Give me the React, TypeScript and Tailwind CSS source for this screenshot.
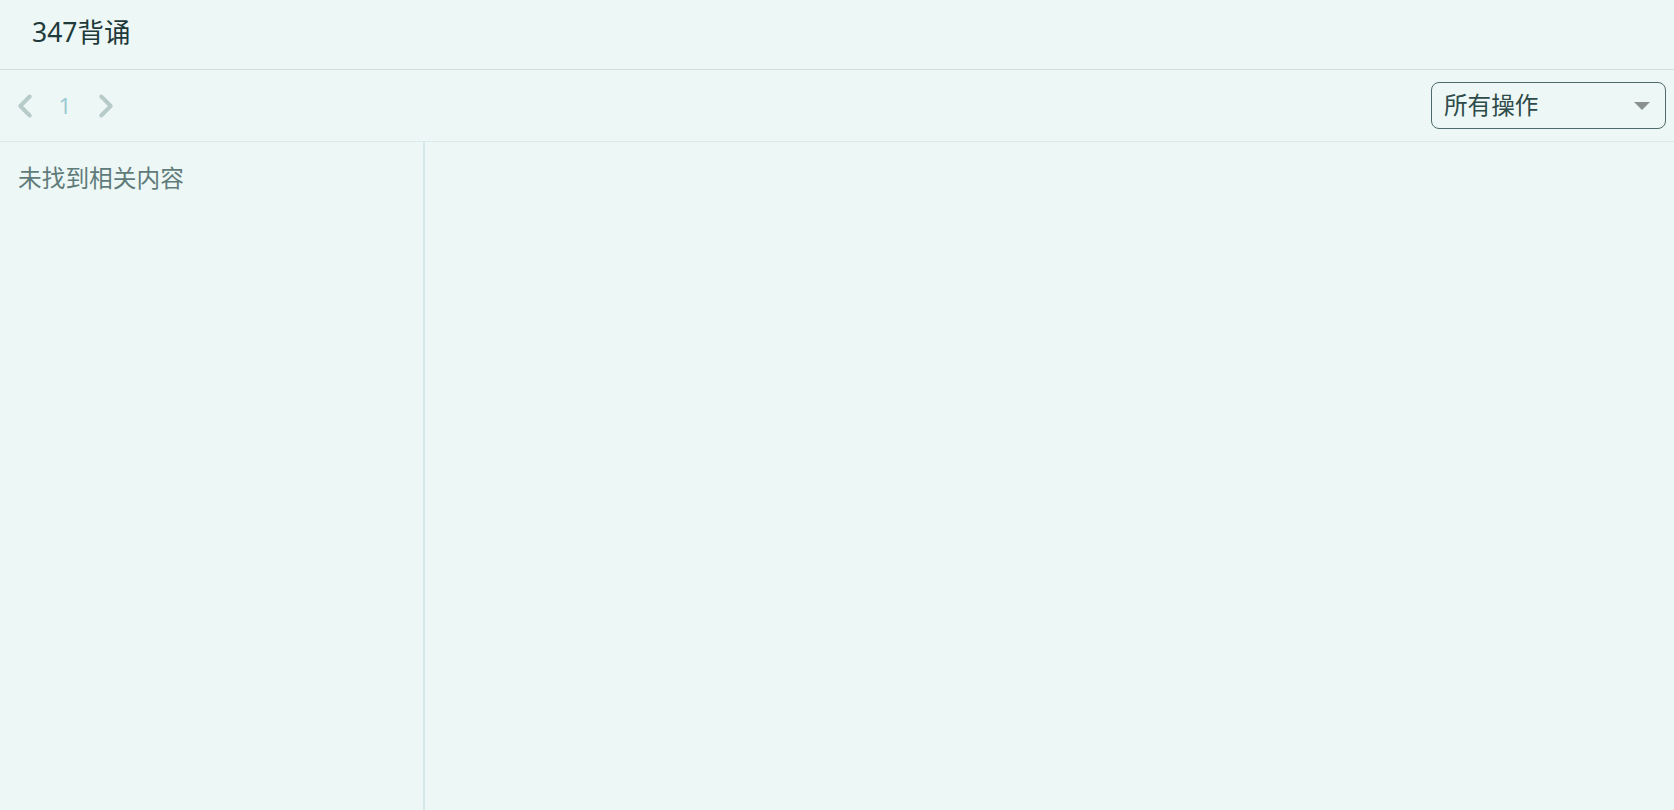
import { ChevronLeft, ChevronRight } from "lucide-react";

const font = { fontFamily: '"Noto Sans", "Noto Sans CJK SC", sans-serif' };

export default function App() {
  return (
    <div
      className="flex h-[810px] w-full flex-col overflow-hidden bg-[#edf7f5] text-[#1f3a3a]"
      style={font}
    >
      <header className="flex h-[70px] shrink-0 items-center border-b border-[#cfe0e0] pb-[4px] pl-[32px]">
        <h1 className="text-[26.5px] leading-none">347背诵</h1>
      </header>

      <div className="flex h-[72px] shrink-0 items-center justify-between border-b border-[#d9eaea] pl-[6px] pr-[8px]">
        <div className="flex items-center">
          <button className="flex h-[40px] w-[38px] items-center justify-center text-[#b7cbc9]">
            <ChevronLeft size={38} strokeWidth={2.5} />
          </button>
          <span className="ml-[9px] w-[24px] text-center text-[22.5px] text-[#9dcbd3]">1</span>
          <button className="ml-[10px] flex h-[40px] w-[38px] items-center justify-center text-[#b7cbc9]">
            <ChevronRight size={38} strokeWidth={2.5} />
          </button>
        </div>
        <div className="flex h-[47px] w-[235px] items-center justify-between rounded-[8px] border border-[#4f6a6a] pl-[12px] pr-[15px]">
          <span className="text-[23.6px] leading-none text-[#2e4a49]">所有操作</span>
          <span className="h-0 w-0 border-x-[8.5px] border-t-[8px] border-x-transparent border-t-[#8a8f8f]" />
        </div>
      </div>

      <div className="flex min-h-0 flex-1">
        <aside className="w-[425px] shrink-0 border-r-2 border-[#d6e8ea] pl-[18px] pt-[20px]">
          <p className="text-[23.7px] leading-[32px] text-[#5f7c7b]">未找到相关内容</p>
        </aside>
        <main className="flex-1" />
      </div>
    </div>
  );
}
